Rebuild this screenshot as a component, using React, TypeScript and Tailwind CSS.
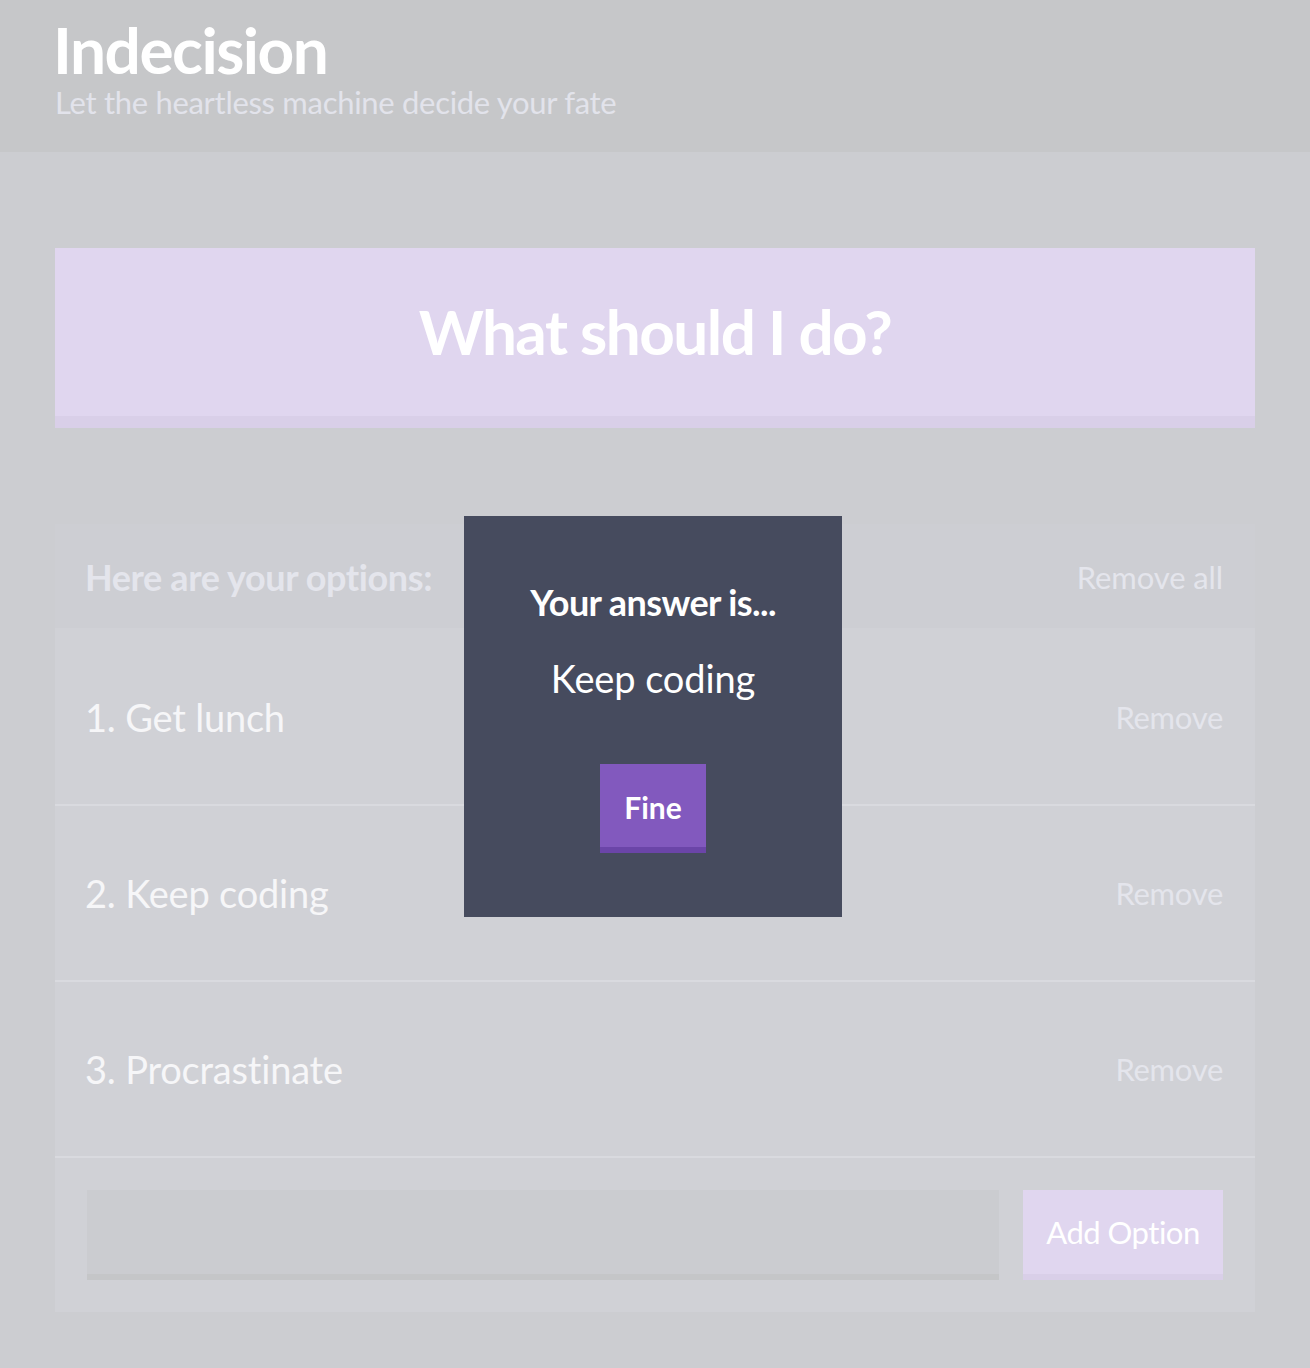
import React from "react";

const options = ["Get lunch", "Keep coding", "Procrastinate"];

export default function App() {
  return (
    <div className="relative min-h-[1368px] bg-[#cccdd1] font-['Lato','Noto_Sans',sans-serif]">
      {/* Header */}
      <header className="h-[152px] bg-[#c6c7c9] pt-[14px]">
        <div className="mx-auto w-[1200px]">
          <h1 className="ml-[-2px] text-[64px] font-bold leading-[72px] tracking-[-1.5px] text-white">Indecision</h1>
          <h2 className="mt-[-4px] text-[31px] leading-[40px] tracking-[-0.3px] text-[#e2e3eb]">
            Let the heartless machine decide your fate
          </h2>
        </div>
      </header>

      <main className="mx-auto w-[1200px] pt-[96px] pb-[56px]">
        {/* Big button */}
        <button className="flex h-[180px] w-full items-center justify-center border-b-[12px] border-[#d9cfe8] bg-[#e0d6ef] pb-[2px] text-[62px] font-bold tracking-[-1.5px] text-white">
          What should I do?
        </button>

        {/* Widget */}
        <section className="mt-[96px] bg-[#d0d1d6]">
          <div className="flex h-[106px] items-center justify-between border-b-2 border-[#d0d1d6] bg-[#cdced3] px-[32px] pt-[2px]">
            <h3 className="ml-[-2px] text-[36px] font-bold tracking-[-0.4px] text-[#e4e5ec]">Here are your options:</h3>
            <span className="text-[31px] tracking-[-0.1px] text-[#e4e5ec]">Remove all</span>
          </div>
          {options.map((opt, i) => (
            <div
              key={opt}
              className="flex h-[176px] items-center justify-between border-b-2 border-[#d9dadf] px-[32px]"
            >
              <p className="ml-[-2px] text-[38px] tracking-[-0.2px] text-[#f6f6f8]">
                {i + 1}. {opt}
              </p>
              <span className="text-[31px] tracking-[-0.3px] text-[#e4e5ec]">Remove</span>
            </div>
          ))}
          <form className="flex gap-[24px] p-[32px]" onSubmit={(e) => e.preventDefault()}>
            <input className="h-[90px] flex-1 border-b-[6px] border-[#c5c6c8] bg-[#cbccd0] outline-none" />
            <button className="h-[90px] w-[200px] border-b-[6px] border-[#d9cfe8] bg-[#e0d6ef] text-[31px] tracking-[-0.5px] text-white">
              Add Option
            </button>
          </form>
        </section>
      </main>

      {/* Modal */}
      <div className="absolute left-[464px] top-[516px] flex h-[401px] w-[378px] flex-col items-center bg-[#464b5e] pt-[62px] text-center text-white">
        <h3 className="text-[36px] font-bold leading-[48px] tracking-[-0.6px]">Your answer is...</h3>
        <p className="mt-[28px] text-[38px] leading-[48px] tracking-[-0.1px]">Keep coding</p>
        <button className="mt-[62px] h-[89px] w-[106px] border-b-[6px] border-[#6b45a8] bg-[#8259be] pt-[4px] text-[30px] font-bold text-white">
          Fine
        </button>
      </div>
    </div>
  );
}
